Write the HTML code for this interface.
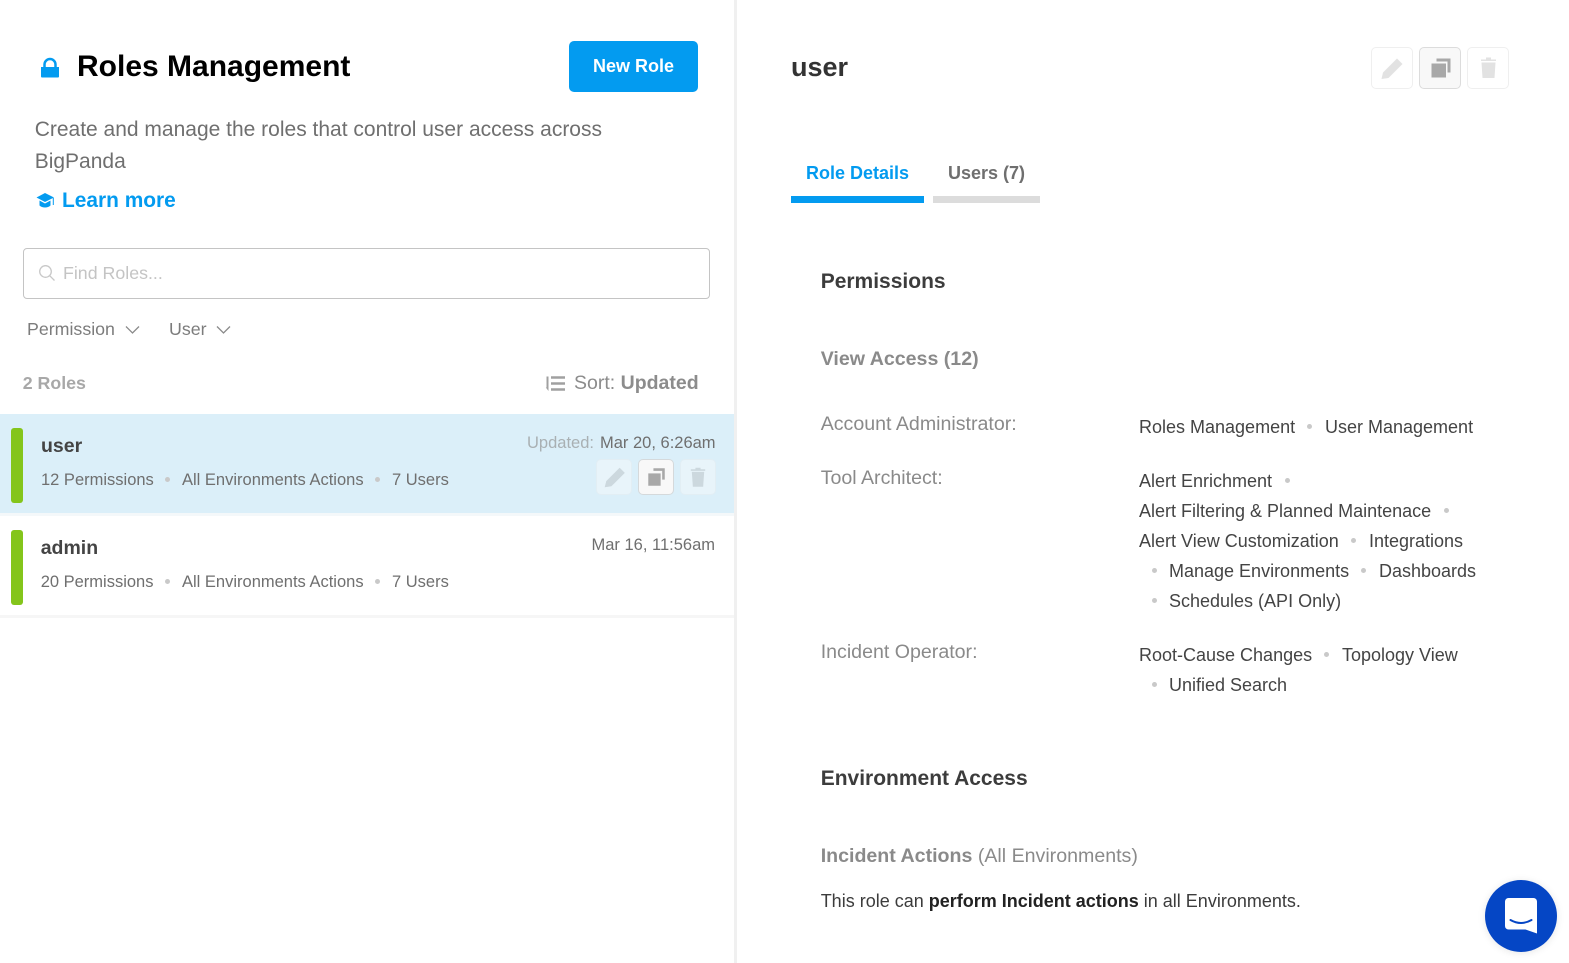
<!DOCTYPE html>
<html><head><meta charset="utf-8"><style>
html,body{margin:0;padding:0;width:1569px;height:963px;overflow:hidden;background:#fff;font-family:"Liberation Sans",sans-serif}
.t{position:absolute;white-space:nowrap;line-height:24px;height:24px}
.b{font-weight:bold}
.a{position:absolute}
.dot{position:absolute;width:5px;height:5px;border-radius:50%;background:#c9c9c9}
.ib{position:absolute;width:34px;height:34px;border:1px solid #e9e9e9;border-radius:5px;box-sizing:content-box;background:rgba(255,255,255,.3)}
.ib svg{position:absolute;left:0;top:0}
.g{color:#6f6f6f}
.m{color:#444}
.s{font-size:16.5px}
.l{font-size:19.6px;color:#8a8a8a}
</style></head><body>
<div class="a" style="left:734px;top:0;width:3px;height:963px;background:#f0f0f0"></div>

<svg class="a" style="left:40px;top:57px" width="20" height="22" viewBox="0 0 20 22"><path d="M1 10h18v9.500a1 1 0 0 1-1 1H2a1 1 0 0 1-1-1z" fill="#039bf0"/><path d="M4.500 11V7.500a5.500 5.500 0 0 1 11 0V11" fill="none" stroke="#039bf0" stroke-width="2.500"/></svg>
<div class="t b" style="left:77px;top:55px;font-size:30px;color:#000">Roles Management</div>
<div class="a" style="left:569px;top:41px;width:129px;height:51px;background:#039bf0;border-radius:5px"></div>
<div class="t b" style="left:569px;width:129px;text-align:center;top:54px;font-size:18px;color:#fff">New Role</div>

<div class="t" style="left:34.700px;top:118px;font-size:21px;color:#6f6f6f">Create and manage the roles that control user access across</div>
<div class="t" style="left:34.700px;top:150px;font-size:21px;color:#6f6f6f">BigPanda</div>
<svg class="a" style="left:36px;top:192px" width="19" height="17" viewBox="0 0 19 17"><path d="M9 1L18 5.500 9 10 0.500 5.500z" fill="#039bf0"/><path d="M3.500 8.500V13.500C6 16.200 12 16.200 14.500 13.500V8.500L9 11.500z" fill="#039bf0"/><path d="M17.300 6v7" stroke="#039bf0" stroke-width="1"/></svg>
<div class="t b" style="left:62px;top:189px;font-size:20.900px;color:#039bf0">Learn more</div>

<div class="a" style="left:23px;top:248px;width:685px;height:49px;border:1px solid #c4c4c4;border-radius:4px"></div>
<svg class="a" style="left:38px;top:264px" width="18" height="18" viewBox="0 0 18 18"><circle cx="7.500" cy="7.500" r="5.800" fill="none" stroke="#c8c8c8" stroke-width="1.300"/><path d="M11.800 11.800L16.500 16.500" stroke="#c8c8c8" stroke-width="1.300"/></svg>
<div class="t" style="left:63px;top:261px;font-size:17.800px;color:#c4c4c4">Find Roles...</div>

<div class="t" style="left:27px;top:317px;font-size:17.800px;color:#7c7c7c">Permission</div>
<svg class="a" style="left:125px;top:325px" width="15" height="10" viewBox="0 0 15 10"><path d="M1 1.500L7.500 8 14 1.500" fill="none" stroke="#8a8a8a" stroke-width="1.300"/></svg>
<div class="t" style="left:169px;top:317px;font-size:17.800px;color:#7c7c7c">User</div>
<svg class="a" style="left:216px;top:325px" width="15" height="10" viewBox="0 0 15 10"><path d="M1 1.500L7.500 8 14 1.500" fill="none" stroke="#8a8a8a" stroke-width="1.300"/></svg>

<div class="t b" style="left:22.700px;top:371px;font-size:17.800px;color:#a8a8a8">2 Roles</div>
<svg class="a" style="left:545px;top:375px" width="20" height="17" viewBox="0 0 20 17"><path d="M6 2.500h14M6 8.500h14M6 14.500h14" stroke="#a0a0a0" stroke-width="2.400"/><path d="M2.500 1.500v12" stroke="#a0a0a0" stroke-width="2"/><path d="M0.800 12.500L3.500 16V12.500z" fill="#a0a0a0"/></svg>
<div class="t" style="left:574px;top:371px;font-size:19.500px;color:#8c8c8c">Sort: <span class="b">Updated</span></div>

<!-- user row -->
<div class="a" style="left:0;top:414px;width:734px;height:99px;background:#dbeff9"></div>
<div class="a" style="left:11px;top:428px;width:12px;height:75px;background:#84c51b;border-radius:3px"></div>
<div class="t b m" style="left:41px;top:434px;font-size:19.500px">user</div>
<div class="t g s" style="left:41px;top:468px">12 Permissions</div>
<div class="dot" style="left:165px;top:477px"></div>
<div class="t g s" style="left:182px;top:468px">All Environments Actions</div>
<div class="dot" style="left:375px;top:477px"></div>
<div class="t g s" style="left:392px;top:468px">7 Users</div>
<div class="t s" style="left:527px;top:431px;color:#a9b0b3">Updated:</div>
<div class="t g s" style="left:600px;top:431px">Mar 20, 6:26am</div>

<div class="ib" style="left:596px;top:459px;background:#e8f4fa;border-color:#e2eef4"><svg width="34" height="34" viewBox="0 0 33 33"><path d="M7.500 26.500l1.500-6L22 7.500l5 5L14 25.500z" fill="#ccd8de"/></svg></div>
<div class="ib" style="left:638px;top:459px;background:#f8f8f8;border-color:#d5d9db"><svg width="34" height="34" viewBox="0 0 33 33"><path d="M9 13h12v12H9z" fill="#a8a8a8"/><path d="M14 8h11v11h-2.500V10.500H14z" fill="#a8a8a8"/></svg></div>
<div class="ib" style="left:680px;top:459px;background:#e8f4fa;border-color:#e2eef4"><svg width="34" height="34" viewBox="0 0 33 33"><path d="M10.500 11.500h12l-1 14.500h-10z" fill="#ccd8de"/><path d="M9.500 9h14v1.500h-14zM14 7.500h5V9h-5z" fill="#ccd8de"/></svg></div>

<!-- admin row -->
<div class="a" style="left:0;top:513px;width:734px;height:3px;background:#f4f8fa"></div>
<div class="a" style="left:11px;top:530px;width:12px;height:75px;background:#84c51b;border-radius:3px"></div>
<div class="t b m" style="left:40.700px;top:536px;font-size:19.500px">admin</div>
<div class="t g s" style="left:40.700px;top:570px">20 Permissions</div>
<div class="dot" style="left:165px;top:579px"></div>
<div class="t g s" style="left:182px;top:570px">All Environments Actions</div>
<div class="dot" style="left:375px;top:579px"></div>
<div class="t g s" style="left:392px;top:570px">7 Users</div>
<div class="t g s" style="left:591.500px;top:533px">Mar 16, 11:56am</div>
<div class="a" style="left:0;top:615px;width:734px;height:3px;background:#f6f6f6"></div>

<!-- right panel -->
<div class="t b" style="left:791px;top:55px;font-size:27px;color:#333">user</div>
<div class="ib" style="left:1371px;top:47px;width:40px;height:40px;background:#fff;border-color:#efefef"><svg width="40" height="40" viewBox="0 0 39 40"><path d="M9 31l1.500-6.500L24.500 10.500 30 16 16 30z" fill="#e2e2e2"/></svg></div>
<div class="ib" style="left:1419px;top:47px;width:40px;height:40px;background:#f8f8f8;border-color:#dcdcdc"><svg width="40" height="40" viewBox="0 0 39 40"><path d="M11 15.500h14.500V29.500H11z" fill="#a8a8a8"/><path d="M16 10.500h14v14h-3V13.500H16z" fill="#a8a8a8"/></svg></div>
<div class="ib" style="left:1467px;top:47px;width:40px;height:40px;background:#fff;border-color:#efefef"><svg width="40" height="40" viewBox="0 0 39 40"><path d="M13 14.500h14l-1 15.500H14z" fill="#e2e2e2"/><path d="M12.500 11.500h15V13h-15zM17.500 9.500h5v2h-5z" fill="#e2e2e2"/></svg></div>

<div class="t b" style="left:806px;top:161px;font-size:18px;color:#039bf0">Role Details</div>
<div class="t b" style="left:948px;top:161px;font-size:18px;color:#6f6f6f">Users (7)</div>
<div class="a" style="left:791px;top:196px;width:133px;height:7px;background:#039bf0"></div>
<div class="a" style="left:933px;top:196px;width:107px;height:7px;background:#dcdcdc"></div>

<div class="t b" style="left:820.700px;top:270px;font-size:21px;color:#3c3c3c">Permissions</div>
<div class="t b l" style="left:820.700px;top:347px">View Access (12)</div>

<div class="t l" style="left:820.700px;top:412px">Account Administrator:</div>
<div class="t m" style="left:1139px;top:415px;font-size:18px">Roles Management</div>
<div class="dot" style="left:1307px;top:424px"></div>
<div class="t m" style="left:1325px;top:415px;font-size:18px">User Management</div>

<div class="t l" style="left:820.700px;top:466px">Tool Architect:</div>
<div class="t m" style="left:1139px;top:469px;font-size:18px">Alert Enrichment</div>
<div class="dot" style="left:1285px;top:478px"></div>
<div class="t m" style="left:1139px;top:499px;font-size:18px">Alert Filtering &amp; Planned Maintenace</div>
<div class="dot" style="left:1444px;top:508px"></div>
<div class="t m" style="left:1139px;top:529px;font-size:18px">Alert View Customization</div>
<div class="dot" style="left:1351px;top:538px"></div>
<div class="t m" style="left:1369px;top:529px;font-size:18px">Integrations</div>
<div class="dot" style="left:1152px;top:568px"></div>
<div class="t m" style="left:1169px;top:559px;font-size:18px">Manage Environments</div>
<div class="dot" style="left:1361px;top:568px"></div>
<div class="t m" style="left:1379px;top:559px;font-size:18px">Dashboards</div>
<div class="dot" style="left:1152px;top:598px"></div>
<div class="t m" style="left:1169px;top:589px;font-size:18px">Schedules (API Only)</div>

<div class="t l" style="left:820.700px;top:640px">Incident Operator:</div>
<div class="t m" style="left:1139px;top:643px;font-size:18px">Root-Cause Changes</div>
<div class="dot" style="left:1324px;top:652px"></div>
<div class="t m" style="left:1342px;top:643px;font-size:18px">Topology View</div>
<div class="dot" style="left:1152px;top:682px"></div>
<div class="t m" style="left:1169px;top:673px;font-size:18px">Unified Search</div>

<div class="t b" style="left:820.700px;top:767px;font-size:21px;color:#3c3c3c">Environment Access</div>
<div class="t l" style="left:820.700px;top:844px"><span class="b">Incident Actions</span> (All Environments)</div>
<div class="t" style="left:820.700px;top:889px;font-size:18px;color:#3c3c3c">This role can <span class="b" style="color:#222">perform Incident actions</span> in all Environments.</div>

<div class="a" style="left:1485px;top:880px;width:72px;height:72px;border-radius:50%;background:#0546c5;box-shadow:0 1px 8px rgba(0,0,0,.1)"></div>
<svg class="a" style="left:1505px;top:898px" width="32" height="36" viewBox="0 0 32 36"><path d="M3.500 0H28.500A3.500 3.500 0 0 1 32 3.500V35.500L20.500 31.500H3.500A3.500 3.500 0 0 1 0 28V3.500A3.500 3.500 0 0 1 3.500 0z" fill="#fff"/><path d="M5.500 22Q16 28 26.500 22" fill="none" stroke="#0546c5" stroke-width="2" stroke-linecap="round"/></svg>
</body></html>
